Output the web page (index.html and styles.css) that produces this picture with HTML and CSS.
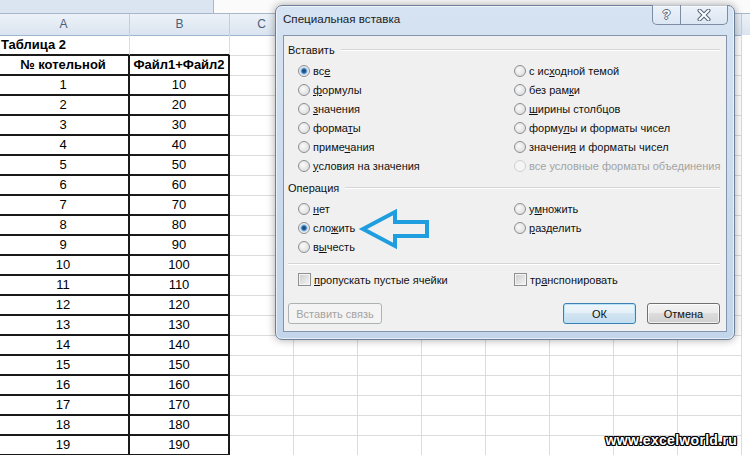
FILE: index.html
```html
<!DOCTYPE html>
<html lang="ru">
<head>
  <meta charset="UTF-8">
  <title>Специальная вставка</title>
  <link rel="stylesheet" href="styles.css">
</head>
<body>
  <div class="formula-bar">
    <div class="namebox"></div>
    <div class="input"></div>
  </div>

  <div class="sheet" id="sheet">
    <div class="row heads">
      <div class="cell">A</div><div class="cell">B</div><div class="cell">C</div><div class="cell"></div><div class="cell"></div>
      <div class="cell"></div><div class="cell"></div><div class="cell"></div><div class="cell"></div><div class="cell"></div>
    </div>
  </div>

  <div class="dialog">
    <div class="titlebar">
      <span class="title">Специальная вставка</span>
      <div class="caption-btns">
        <span class="help">?</span>
        <span class="close">
          <svg width="14" height="12" viewBox="0 0 14 12">
            <path d="M2.5 1.5 L11.5 10.5 M11.5 1.5 L2.5 10.5" stroke="#56657a" stroke-width="4" stroke-linecap="round"/>
            <path d="M2.5 1.5 L11.5 10.5 M11.5 1.5 L2.5 10.5" stroke="#fff" stroke-width="2" stroke-linecap="round"/>
          </svg>
        </span>
      </div>
    </div>

    <div class="panel">
      <div class="group-title">Вставить</div>
      <div class="options">
        <label class="opt"><span class="radio on"></span><span>вс<u>е</u></span></label>
        <label class="opt"><span class="radio"></span><span>с ис<u>х</u>одной темой</span></label>
        <label class="opt"><span class="radio"></span><span><u>ф</u>ормулы</span></label>
        <label class="opt"><span class="radio"></span><span>без рам<u>к</u>и</span></label>
        <label class="opt"><span class="radio"></span><span><u>з</u>начения</span></label>
        <label class="opt"><span class="radio"></span><span><u>ш</u>ирины столбцов</span></label>
        <label class="opt"><span class="radio"></span><span>форма<u>т</u>ы</span></label>
        <label class="opt"><span class="radio"></span><span>форму<u>л</u>ы и форматы чисел</span></label>
        <label class="opt"><span class="radio"></span><span>приме<u>ч</u>ания</span></label>
        <label class="opt"><span class="radio"></span><span>значени<u>я</u> и форматы чисел</span></label>
        <label class="opt"><span class="radio"></span><span><u>у</u>словия на значения</span></label>
        <label class="opt off"><span class="radio"></span><span>все условные форматы объединения</span></label>
      </div>

      <div class="group-title op">Операция</div>
      <div class="options">
        <label class="opt"><span class="radio"></span><span><u>н</u>ет</span></label>
        <label class="opt"><span class="radio"></span><span>у<u>м</u>ножить</span></label>
        <label class="opt"><span class="radio on"></span><span>сло<u>ж</u>ить</span></label>
        <label class="opt"><span class="radio"></span><span><u>р</u>азделить</span></label>
        <label class="opt"><span class="radio"></span><span>в<u>ы</u>честь</span></label>
      </div>

      <div class="sep"></div>

      <div class="options checks">
        <label class="opt"><span class="check"></span><span><u>п</u>ропускать пустые ячейки</span></label>
        <label class="opt"><span class="check"></span><span>тр<u>а</u>нспонировать</span></label>
      </div>

      <div class="buttons">
        <button class="btn" disabled>Вставить связь</button>
        <span class="spacer"></span>
        <button class="btn ok">ОК</button>
        <button class="btn">Отмена</button>
      </div>
    </div>
  </div>

  <svg class="arrow" width="76" height="42" viewBox="0 0 76 42">
    <polygon points="5,21 37,4 37,14 69,14 69,28 37,28 37,38" fill="none" stroke="#1e9ddf" stroke-width="4"/>
  </svg>

  <div class="watermark">www.excelworld.ru</div>

  <script>
    const sheet = document.getElementById("sheet");
    const emptyCells = '<div class="cell"></div>'.repeat(8);

    function addRow(className, a, b) {
      const row = document.createElement("div");
      row.className = "row " + className;
      row.innerHTML = `<div class="cell a">${a}</div><div class="cell b">${b}</div>` + emptyCells;
      sheet.appendChild(row);
    }

    addRow("caption", "Таблица 2", "");
    addRow("framed bold", "№ котельной", "Файл1+Файл2");
    for (let i = 1; i <= 19; i++) {
      addRow("framed", i, i * 10);
    }
  </script>
</body>
</html>
```

FILE: styles.css
```css
body {
  margin: 0;
  width: 750px;
  height: 455px;
  overflow: hidden;
  position: relative;
  background: #fff;
  font-family: "Liberation Sans", Arial, sans-serif;
}

/* spreadsheet */
.formula-bar {
  display: flex;
  height: 13px;
  border-bottom: 1px solid #a7b8cc;
}
.formula-bar .namebox {
  width: 213px;
  background: #dbe5f1;
  border-right: 1px solid #a7b8cc;
}
.formula-bar .input {
  flex: 1;
  background: #fbfbfb;
}
.sheet {
  margin-left: -2px;
}
.row {
  display: grid;
  grid-template-columns: 132px 100px repeat(8, 64px);
  height: 20px;
}
.cell {
  box-sizing: border-box;
  border-right: 1px solid #dadcdd;
  border-bottom: 1px solid #dadcdd;
  font-size: 13px;
  line-height: 19px;
  text-align: center;
  color: #000;
  white-space: nowrap;
}
.heads {
  height: 21px;
  background: linear-gradient(#edf2f8, #dae4f0);
}
.heads .cell {
  border-right: 1px solid #c0cfdf;
  border-bottom: 1px solid #9eb6ce;
  color: #4d5e78;
  font-size: 12px;
  line-height: 21px;
}
.caption .a {
  text-align: left;
  padding-left: 3px;
  font-weight: bold;
}
.caption .a,
.caption .b {
  border-bottom: 2px solid #1a1a1a;
}
.framed .a,
.framed .b {
  border-right: 2px solid #1a1a1a;
  border-bottom: 2px solid #1a1a1a;
}
.bold .cell {
  font-weight: bold;
}

/* dialog */
.dialog {
  position: absolute;
  left: 275px;
  top: 5px;
  width: 460px;
  height: 335px;
  box-sizing: border-box;
  padding: 0 7px 7px 7px;
  border: 1px solid #6d7f97;
  border-radius: 7px;
  background: linear-gradient(#d6e3f2, #c3d5ea);
  box-shadow: 0 0 8px rgba(0, 0, 0, 0.35), inset 0 0 0 1px rgba(255, 255, 255, 0.6);
  display: flex;
  flex-direction: column;
  font-size: 11px;
  color: #111;
}
.titlebar {
  display: flex;
  height: 29px;
}
.title {
  margin-top: 5px;
  line-height: 16px;
  font-size: 11.6px;
  color: #1b1b1b;
}
.caption-btns {
  display: flex;
  margin: -1px -1px 0 auto;
  height: 20px;
  box-sizing: border-box;
  border: 1px solid #7b8ca4;
  border-top: 0;
  border-radius: 0 0 5px 5px;
  background: linear-gradient(rgba(255, 255, 255, 0.55), rgba(255, 255, 255, 0.15));
}
.caption-btns span {
  display: flex;
  align-items: center;
  justify-content: center;
}
.caption-btns .help {
  width: 27px;
  border-right: 1px solid #7b8ca4;
  font-weight: bold;
  font-size: 13px;
  color: #fff;
  text-shadow: 1px 0 #56657a, -1px 0 #56657a, 0 1px #56657a, 0 -1px #56657a;
}
.caption-btns .close {
  width: 46px;
}
.panel {
  flex: 1;
  background: #f0f0f0;
  border: 1px solid #8295ad;
  padding: 6px 6px 0 4px;
  display: flex;
  flex-direction: column;
}
.group-title {
  display: flex;
  align-items: center;
  line-height: 16px;
}
.group-title::after {
  content: "";
  flex: 1;
  margin-left: 6px;
  border-top: 1px solid #d5d5d5;
  border-bottom: 1px solid #fff;
}
.group-title.op {
  margin-top: 5px;
}
.options {
  display: grid;
  grid-template-columns: 216px 1fr;
  grid-auto-rows: 19px;
  margin-top: 3px;
  padding-left: 10px;
}
.opt {
  display: flex;
  align-items: center;
  gap: 3px;
  white-space: nowrap;
}
.opt.off {
  color: #a3a3a3;
}
u {
  text-underline-offset: 1px;
}
.radio {
  width: 12px;
  height: 12px;
  box-sizing: border-box;
  border-radius: 50%;
  border: 1px solid #8c8f92;
  background: radial-gradient(circle at 40% 40%, #fafafa, #d6d6d6);
}
.radio.on {
  background: radial-gradient(circle, #103c6a 0, #2a68a6 2px, #86b8e2 3px, #e4ebf1 4px, #eeeeee 5px);
}
.off .radio {
  border-color: #cfd1d3;
  background: #f5f5f5;
}
.check {
  width: 13px;
  height: 13px;
  box-sizing: border-box;
  border: 1px solid #8e8f8f;
  background: linear-gradient(135deg, #cbcbcb, #f6f6f6);
  box-shadow: inset 0 0 0 1px #f4f4f4;
}
.sep {
  margin-top: 7px;
  border-top: 1px solid #d5d5d5;
  border-bottom: 1px solid #fff;
}
.checks {
  margin-top: 5px;
}
.buttons {
  display: flex;
  gap: 11px;
  margin-top: 14px;
}
.spacer {
  flex: 1;
}
.btn {
  width: 73px;
  height: 21px;
  box-sizing: border-box;
  border: 1px solid #707070;
  border-radius: 3px;
  background: linear-gradient(#f3f3f3 0, #ebebeb 50%, #dddddd 50%, #d0d0d0 100%);
  box-shadow: inset 0 0 0 1px rgba(255, 255, 255, 0.7);
  font-family: inherit;
  font-size: 11px;
  color: #111;
  padding: 0;
}
.btn.ok {
  border-color: #3c7fb1;
  box-shadow: inset 0 0 0 1px #b8e3f8;
  background: linear-gradient(#eef6fb 0, #e3eff7 50%, #d2e5f2 50%, #c6dced 100%);
}
.btn[disabled] {
  width: 94px;
  border-color: #adb2b5;
  background: #f4f4f4;
  box-shadow: none;
  color: #a3a3a3;
}

/* overlay marks */
.arrow {
  position: absolute;
  left: 358px;
  top: 208px;
}
.watermark {
  position: absolute;
  right: 13px;
  bottom: 7px;
  font-weight: bold;
  font-size: 14px;
  letter-spacing: 0.3px;
  color: #fff;
  text-shadow: 1px 0 #000, -1px 0 #000, 0 1px #000, 0 -1px #000,
    1px 1px #000, -1px -1px #000, 1px -1px #000, -1px 1px #000;
}
```
